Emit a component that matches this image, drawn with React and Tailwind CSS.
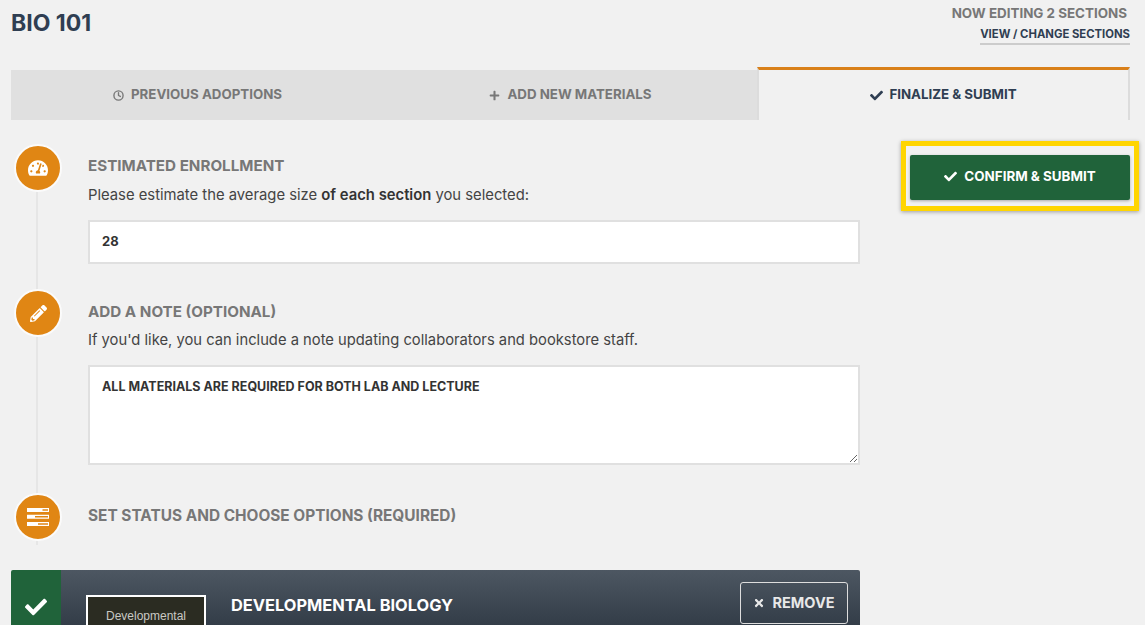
import { FaCheck, FaPlus, FaTimes, FaPencilAlt, FaTachometerAlt } from "react-icons/fa";
import { FiClock } from "react-icons/fi";

const StatusIcon = () => (
    <svg viewBox="0 0 22 18" className="w-[22px] h-[18px]" fill="#fff">
        <path fillRule="evenodd" d="M0 0h22v4H0zM15.500 1.300h5.500v1.400h-5.500zM0 6.800h22v4H0zM8 8.100h13v1.400H8zM0 14h22v4H0zM11 15.300h10v1.400H11z" />
    </svg>
)

const Step = ({ icon, last, children, className, contentClass }) => (
    <div className={`flex ${className}`}>
        <div className="w-[77px] shrink-0 pl-[3px] flex flex-col items-start">
            <div className="w-[48px] h-[48px] rounded-full bg-[#e08614] border-2 border-[#fbfbfb] flex items-center justify-center text-white text-[20px] shrink-0">
                {icon}
            </div>
            <div className={`w-[2px] ml-[22px] bg-[#e6e6e6] ${last ? 'h-[4px]' : 'flex-1'}`}></div>
        </div>
        <div className={`flex-1 ${contentClass}`}>
            {children}
        </div>
    </div>
)

const App = () => {
    return (
        <div className="h-[625px] overflow-hidden bg-[#f1f1f1] font-['Inter','Liberation_Sans',sans-serif] text-[#444]">
            <div className="h-[67px] pl-[11px] pr-[15px] flex justify-between items-start">
                <h1 className="text-[23px] leading-[28px] mt-[9px] font-bold text-[#2f3e52]">BIO 101</h1>
                <div className="flex flex-col items-end">
                    <div className="text-[13.400px] leading-[16px] mt-[5px] mr-[3px] font-bold text-[#777]">NOW EDITING 2 SECTIONS</div>
                    <a className="text-[11.300px] leading-[16px] mt-[5px] pb-[1px] font-bold text-[#2f3e52] border-b-2 border-[#ccc]">VIEW / CHANGE SECTIONS</a>
                </div>
            </div>

            <div className="ml-[11px] mr-[15px] grid grid-cols-3 h-[53px] text-[13.300px] font-bold">
                <div className="mt-[3px] bg-[#e0e0e0] text-[#777] flex items-center justify-center gap-[7px]">
                    <FiClock className="text-[11px]" strokeWidth={3} /> PREVIOUS ADOPTIONS
                </div>
                <div className="mt-[3px] bg-[#e0e0e0] text-[#777] flex items-center justify-center gap-[7px]">
                    <FaPlus className="text-[11px]" /> ADD NEW MATERIALS
                </div>
                <div className="border-t-[3px] border-t-[#d9801a] border-x-2 border-x-[#dcdcdc] text-[#2f3e52] flex items-center justify-center gap-[6px]">
                    <FaCheck className="text-[13px]" /> FINALIZE &amp; SUBMIT
                </div>
            </div>

            <div className="flex">
                <div className="w-[860px] shrink-0 pl-[11px] pt-[24px]">
                    <Step icon={<FaTachometerAlt />} className="h-[145px]" contentClass="pt-[12px]">
                        <h2 className="text-[15.200px] leading-[20px] font-bold text-[#777]">ESTIMATED ENROLLMENT</h2>
                        <p className="text-[14.800px] leading-[20px] mt-[9px]">Please estimate the average size <b className="font-semibold text-[#333]">of each section</b> you selected:</p>
                        <input readOnly value="28" className="block mt-[15px] w-full h-[44px] bg-white border-2 border-[#e0e0e0] px-[12px] pb-[2px] text-[13px] font-bold text-[#333]" />
                    </Step>
                    <Step icon={<FaPencilAlt className="text-[17px]" />} className="h-[204px]" contentClass="pt-[13px]">
                        <h2 className="text-[15.200px] leading-[20px] font-bold text-[#777]">ADD A NOTE (OPTIONAL)</h2>
                        <p className="text-[14.750px] leading-[20px] mt-[8px]">If you'd like, you can include a note updating collaborators and bookstore staff.</p>
                        <textarea readOnly value="ALL MATERIALS ARE REQUIRED FOR BOTH LAB AND LECTURE" className="block mt-[15px] w-full h-[100px] bg-white border-2 border-[#e0e0e0] px-[12px] py-[11px] text-[12.500px] font-bold text-[#333]" />
                    </Step>
                    <Step icon={<StatusIcon />} last className="h-[77px]" contentClass="pt-[13px]">
                        <h2 className="text-[15.400px] leading-[20px] font-bold text-[#777]">SET STATUS AND CHOOSE OPTIONS (REQUIRED)</h2>
                    </Step>

                    <div className="flex h-[55px] rounded-t-[2px] overflow-hidden">
                        <div className="w-[50px] shrink-0 bg-[#20633a] flex justify-center pt-[26px] text-white text-[22px]">
                            <FaCheck />
                        </div>
                        <div className="flex-1 flex items-start bg-gradient-to-b from-[#4d5762] to-[#333d48]">
                            <div className="ml-[25px] mt-[25px] w-[120px] h-[90px] border-2 border-white bg-[#2b2c22] text-[#c9c9c4] font-['Liberation_Sans',sans-serif] text-[12px] leading-[15px] text-center pt-[12px]">
                                Developmental Biology
                            </div>
                            <h3 className="ml-[25px] mt-[24px] text-[16.400px] leading-[22px] font-bold text-white">DEVELOPMENTAL BIOLOGY</h3>
                            <button className="ml-auto mr-[12px] mt-[12px] w-[108px] h-[42px] border border-[#ddd] rounded-[3px] text-[#e8e8e8] text-[14.500px] font-bold flex items-center justify-center gap-[7px]">
                                <FaTimes className="text-[12px]" /> REMOVE
                            </button>
                        </div>
                    </div>
                </div>

                <div className="ml-[41px] mt-[21px] w-[238px] h-[70px] border-[5px] border-[#ffd500] pl-[4px] pr-[4px] pt-[9px] shadow-[0_1px_4px_rgba(0,0,0,0.35)]">
                    <button className="w-full h-[45px] rounded-[2px] bg-[#20633a] text-white text-[13.400px] font-bold flex items-center justify-center gap-[7px] pb-[2px] shadow-[0_1px_3px_rgba(0,0,0,0.3)]">
                        <FaCheck className="text-[13px]" /> CONFIRM &amp; SUBMIT
                    </button>
                </div>
            </div>
        </div>
    )
}

export default App;
